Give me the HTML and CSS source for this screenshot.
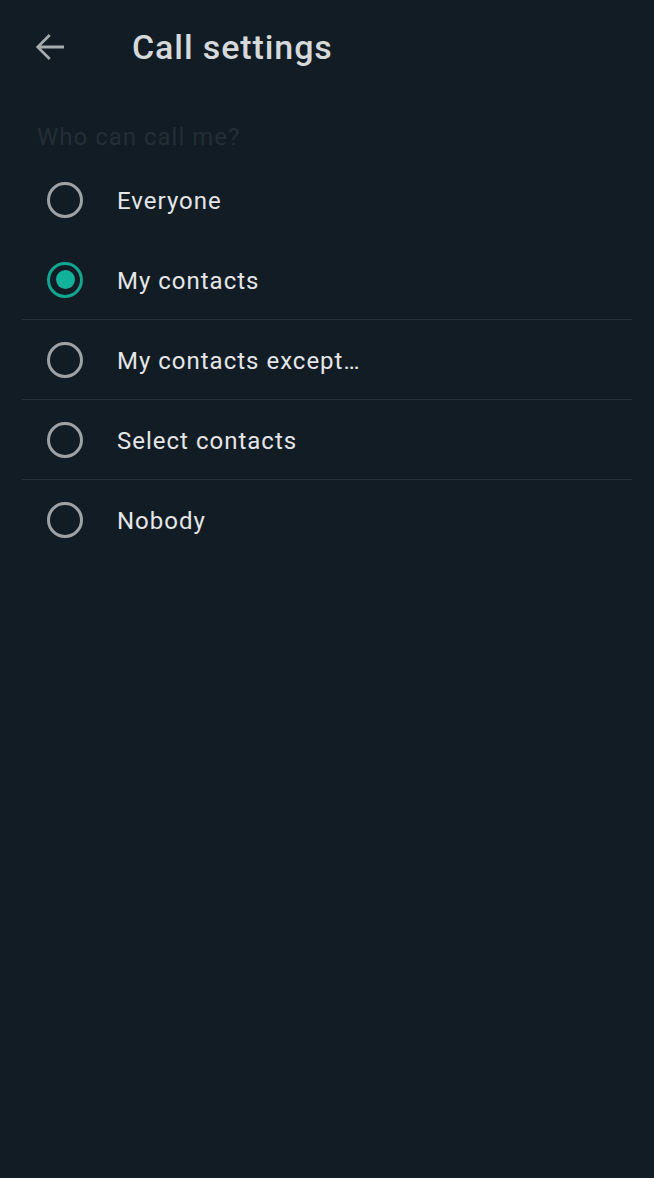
FILE: index.html
```html
<!DOCTYPE html>
<html lang="en">

<head>
    <meta charset="UTF-8">
    <meta name="viewport" content="width=device-width, initial-scale=1.0">
    <title>Call settings</title>
    <link rel="stylesheet" href="styles.css">
</head>

<body>

    <div class="screen">

        <div class="toolbar">
            <button class="back-btn" aria-label="Back">
                <svg width="42" height="42" viewBox="0 0 24 24">
                    <path d="M20 11.2H6.9l5.5-5.5-1.1-1.1L3.9 12l7.4 7.4 1.1-1.1-5.5-5.5H20z" fill="#a7acaf" />
                </svg>
            </button>
            <h1>Call settings</h1>
        </div>

        <h2 class="section-title">Who can call me?</h2>

        <div class="options">
            <div class="option">
                <span class="radio"></span>
                <span class="label">Everyone</span>
            </div>
            <div class="option">
                <span class="radio checked"></span>
                <span class="label">My contacts</span>
            </div>
            <div class="option">
                <span class="radio"></span>
                <span class="label">My contacts except…</span>
            </div>
            <div class="option">
                <span class="radio"></span>
                <span class="label">Select contacts</span>
            </div>
            <div class="option">
                <span class="radio"></span>
                <span class="label">Nobody</span>
            </div>
        </div>

    </div>

</body>

</html>
```

FILE: styles.css
```css
html,
body {
    margin: 0;
    padding: 0;
    height: 100%;
    background-color: #121c24;
    font-family: Roboto, "Noto Sans", sans-serif;
}

.screen {
    display: flex;
    flex-direction: column;
    min-height: 100vh;
    background-color: #121c24;
}

.toolbar {
    display: flex;
    align-items: center;
    height: 94px;
    padding-left: 29px;
}

.back-btn {
    display: flex;
    align-items: center;
    justify-content: center;
    width: 42px;
    height: 42px;
    padding: 0;
    border: none;
    background: transparent;
    cursor: pointer;
}

.toolbar h1 {
    margin: 0 0 0 61px;
    font-size: 34px;
    font-weight: 500;
    letter-spacing: 0.9px;
    color: #d6d9db;
}

.section-title {
    margin: 0;
    padding-left: 37px;
    height: 66px;
    line-height: 86px;
    font-size: 24px;
    font-weight: 400;
    letter-spacing: 1px;
    color: #232e36;
}

.options {
    display: flex;
    flex-direction: column;
    padding: 0 22px;
}

.option {
    display: flex;
    align-items: center;
    height: 80px;
    box-sizing: border-box;
    border-bottom: 1px solid #27313a;
    cursor: pointer;
}

/* no divider under the first and last rows */
.option:first-child,
.option:last-child {
    border-bottom: none;
}

.radio {
    position: relative;
    flex-shrink: 0;
    width: 30px;
    height: 30px;
    margin-left: 25px;
    border: 3px solid #9ea2a5;
    border-radius: 50%;
}

.radio.checked {
    border-color: #11a68e;
}

.radio.checked::after {
    content: "";
    position: absolute;
    left: 5.5px;
    top: 5.5px;
    width: 19px;
    height: 19px;
    border-radius: 50%;
    background-color: #12b19a;
}

.label {
    margin-left: 34px;
    padding-top: 2px;
    font-size: 24px;
    letter-spacing: 1px;
    color: #e4e6e8;
}
```
